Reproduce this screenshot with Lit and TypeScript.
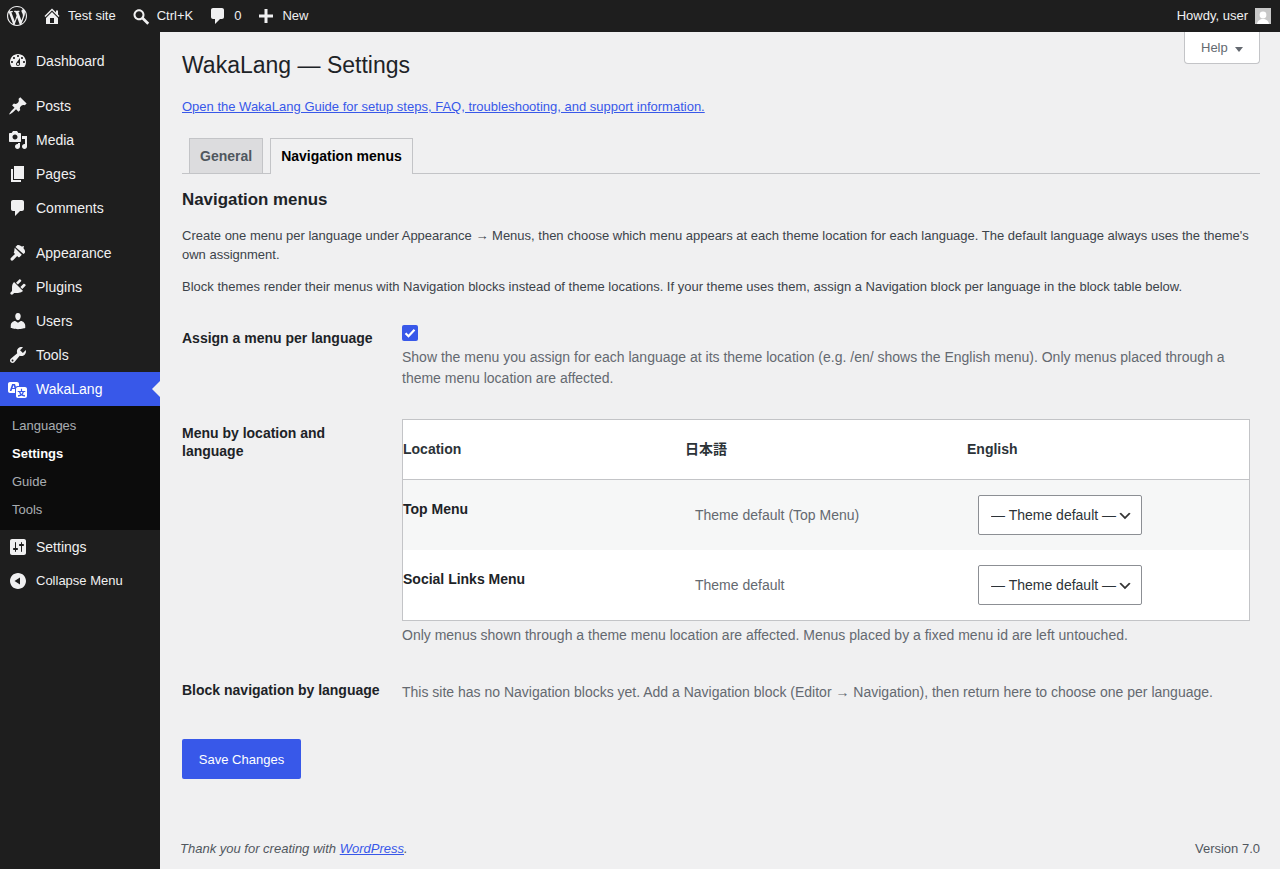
import { LitElement, css, html, svg } from "lit";
import { customElement } from "lit/decorators.js";

const ICONS: Record<string, string> = {
  wp: "M20 10c0-5.51-4.49-10-10-10C4.48 0 0 4.49 0 10c0 5.52 4.48 10 10 10 5.51 0 10-4.48 10-10zM7.78 15.37L4.37 6.22c.55-.02 1.17-.08 1.17-.08.5-.06.44-1.13-.06-1.11 0 0-1.45.11-2.37.11-.18 0-.37 0-.58-.01C4.12 2.69 6.87 1.11 10 1.11c2.33 0 4.45.87 6.05 2.34-.68-.11-1.65.39-1.65 1.58 0 .74.45 1.36.9 2.1.35.61.55 1.36.55 2.46 0 1.49-1.4 5-1.4 5l-3.03-8.37c.54-.02.82-.17.82-.17.5-.05.44-1.25-.06-1.22 0 0-1.44.12-2.38.12-.87 0-2.33-.12-2.33-.12-.5-.03-.56 1.2-.06 1.22l.92.08 1.26 3.41zM17.41 10c.24-.64.74-1.87.43-4.25.7 1.29 1.05 2.71 1.05 4.25 0 3.29-1.73 6.24-4.4 7.78.97-2.59 1.94-5.2 2.92-7.78zM6.1 18.09C3.12 16.65 1.11 13.53 1.11 10c0-1.3.23-2.48.72-3.59C3.25 10.3 4.67 14.2 6.1 18.09zm4.03-6.63l2.58 6.98c-.86.29-1.76.45-2.71.45-.79 0-1.57-.11-2.29-.33.81-2.38 1.62-4.74 2.42-7.1z",
  home: "M16 8.5l1.53 1.53-1.06 1.06L10 4.62l-6.47 6.47-1.06-1.06L10 2.5l4 4v-2h2v4zm-6-2.46l6 5.99V18H4v-5.97zM12 17v-5H8v5h4z",
  search: "M12.9 11.5l5.3 5.3-1.9 1.9-5.3-5.3c-.9.6-1.9.9-3 .9C5 14.3 2.5 11.8 2.5 8.8S5 3.3 8 3.3s5.5 2.5 5.5 5.5c0 1-.2 1.9-.6 2.7zM8 5.3c-1.9 0-3.5 1.6-3.5 3.5s1.6 3.5 3.5 3.5 3.5-1.6 3.5-3.5S9.9 5.3 8 5.3z",
  comment: "M5 2h9c1.1 0 2 .9 2 2v7c0 1.1-.9 2-2 2h-2l-5 5v-5H5c-1.1 0-2-.9-2-2V4c0-1.1.9-2 2-2z",
  plus: "M17 8.500v3h-5.500V17h-3v-5.500H3v-3h5.500V3h3v5.500z",
  dashboard: "M3.76 16h12.48c1.1-1.37 1.76-3.11 1.76-5 0-4.42-3.58-8-8-8s-8 3.58-8 8c0 1.89.66 3.63 1.76 5zM10 4c.55 0 1 .45 1 1s-.45 1-1 1-1-.45-1-1 .45-1 1-1zM6 6c.55 0 1 .45 1 1s-.45 1-1 1-1-.45-1-1 .45-1 1-1zm8 0c.55 0 1 .45 1 1s-.45 1-1 1-1-.45-1-1 .45-1 1-1zm-5.37 5.55L12 7v6c0 1.1-.9 2-2 2s-2-.9-2-2c0-.57.24-1.08.63-1.45zM4 10c.55 0 1 .45 1 1s-.45 1-1 1-1-.45-1-1 .45-1 1-1zm12 0c.55 0 1 .45 1 1s-.45 1-1 1-1-.45-1-1 .45-1 1-1zm-5 3c0-.55-.45-1-1-1s-1 .45-1 1 .45 1 1 1 1-.45 1-1z",
  pin: "M10.44 3.02l1.82-1.82 6.36 6.35-1.83 1.82c-1.05-.68-2.48-.57-3.41.36l-.75.75c-.92.93-1.04 2.35-.35 3.41l-1.83 1.82-2.41-2.41-2.8 2.79c-.42.42-3.38 2.71-3.8 2.29s1.86-3.39 2.28-3.81l2.79-2.79L4.1 9.36l1.83-1.82c1.05.69 2.48.57 3.4-.36l.75-.75c.93-.92 1.05-2.35.36-3.41z",
  media: "M13 11V4c0-.55-.45-1-1-1h-1.67L9 1H5L3.67 3H2c-.55 0-1 .45-1 1v7c0 .55.45 1 1 1h10c.55 0 1-.45 1-1zM7 4.5c1.38 0 2.5 1.12 2.5 2.5S8.38 9.5 7 9.5 4.5 8.38 4.5 7 5.62 4.5 7 4.5zM14 6h5v10.5c0 1.38-1.12 2.5-2.5 2.5S14 17.88 14 16.5s1.12-2.5 2.5-2.5c.17 0 .34.02.5.05V9h-3V6zm-4 8.05V13h2v3.5c0 1.38-1.12 2.5-2.5 2.5S7 17.88 7 16.5 8.12 14 9.5 14c.17 0 .34.02.5.05z",
  pages: "M6 15V2h10v13H6zm-1 1h8v2H3V5h2v11z",
  brush: "M7.4 4L9 2.4c.5-.5 2.3-.5 3.5.3.7.4 1 .9 1.6.8.7-.1 1.300-.7 1.700-.3.4.4-.2 1-.3 1.700-.1.6.5.9.9 1.600.8 1.200.8 3 .3 3.500l-1.200 1.100zM6.700 4.700l7.100 7.100-2.100 2.100c-.5.5-1.200.5-1.600.1l-.9-.9-4.100 4.100c-.6.6-1.600.6-2.200 0s-.6-1.600 0-2.200l4.100-4.100-.9-.9c-.4-.4-.4-1.100.1-1.600z",
  plugin: "M13.11 4.36L9.87 7.6 8 5.73l3.24-3.24c.35-.34 1.05-.2 1.56.32.52.51.66 1.21.31 1.55zm-8 1.77l.91-1.12 9.01 9.01-1.19.84c-.71.71-2.63 1.16-3.82 1.16H6.14L4.9 17.26c-.59.59-1.54.59-2.12 0-.59-.58-.59-1.53 0-2.12l1.24-1.24v-3.88c0-1.13.4-3.19 1.09-3.89zm7.26 3.97l3.24-3.24c.34-.35 1.04-.21 1.55.31.52.51.66 1.21.31 1.55l-3.24 3.25z",
  users: "M10 9.25c-2.27 0-2.73-3.44-2.73-3.44C7 4.02 7.82 2 9.97 2c2.16 0 2.98 2.02 2.71 3.81 0 0-.41 3.44-2.68 3.44zm0 2.57L12.72 10c2.39 0 4.52 2.33 4.52 4.53v2.49s-3.65 1.13-7.24 1.13c-3.65 0-7.24-1.13-7.24-1.13v-2.49c0-2.25 1.94-4.48 4.47-4.48z",
  tools: "M16.68 9.77c-1.34 1.34-3.3 1.67-4.95.99l-5.41 6.52c-.99.99-2.59.99-3.58 0s-.99-2.59 0-3.57l6.52-5.42c-.68-1.65-.35-3.61.99-4.95 1.28-1.28 3.12-1.62 4.72-1.06l-2.89 2.89 2.82 2.82 2.86-2.87c.53 1.58.18 3.39-1.08 4.65zM3.81 16.21c.4.39 1.04.39 1.43 0 .4-.4.4-1.04 0-1.43-.39-.4-1.03-.4-1.43 0-.39.39-.39 1.03 0 1.43z",
  translation: "M11 7H9.49c-.63 0-1.25.3-1.59.7L7 5H4.13l-2.39 7h1.69l.74-2H7v4H2c-1.1 0-2-.9-2-2V5c0-1.1.9-2 2-2h7c1.1 0 2 .9 2 2v2zM6.51 9H4.49l1-2.93zM10 8h7c1.1 0 2 .9 2 2v7c0 1.1-.9 2-2 2h-7c-1.1 0-2-.9-2-2v-7c0-1.1.9-2 2-2zm7.25 5v-1.08h-3.17V9.75h-1.16v2.17H9.75V13h1.28c.11.85.56 1.85 1.28 2.62-.87.36-1.89.62-2.31.62-.01.02.22.97.2 1.46.84 0 2.21-.5 3.28-1.15 1.09.65 2.48 1.15 3.34 1.15-.02-.49.2-1.44.2-1.46-.43 0-1.49-.27-2.38-.63.7-.77 1.14-1.77 1.25-2.61h1.36zm-3.81 1.93c-.5-.46-.85-1.13-1.01-1.93h2.09c-.17.8-.51 1.47-1 1.93l-.04.03s-.03-.02-.04-.03z",
  settings: "M18 16V4c0-1.1-.9-2-2-2H4c-1.1 0-2 .9-2 2v12c0 1.1.9 2 2 2h12c1.1 0 2-.9 2-2zM8 11h1c.55 0 1 .45 1 1s-.45 1-1 1H8v1.5c0 .28-.22.5-.5.5s-.5-.22-.5-.5V13H6c-.55 0-1-.45-1-1s.45-1 1-1h1V5.5c0-.28.22-.5.5-.5s.5.22.5.5V11zm5-2h-1c-.55 0-1-.45-1-1s.45-1 1-1h1V5.5c0-.28.22-.5.5-.5s.5.22.5.5V7h1c.55 0 1 .45 1 1s-.45 1-1 1h-1v5.5c0 .28-.22.5-.5.5s-.5-.22-.5-.5V9z",
  collapse: "M10 2c4.42 0 8 3.58 8 8s-3.58 8-8 8-8-3.58-8-8 3.58-8 8-8zm2 4.5L6.500 10l5.500 3.500v-7z",
};

const icon = (name: string, size = 20) => html`<svg class="icon" width=${size} height=${size} viewBox="0 0 20 20" fill="currentColor">${svg`<path d=${ICONS[name]}></path>`}</svg>`;

const MENU_TOP = [
  { icon: "dashboard", label: "Dashboard", group: true },
  { icon: "pin", label: "Posts" },
  { icon: "media", label: "Media" },
  { icon: "pages", label: "Pages" },
  { icon: "comment", label: "Comments", group: true },
  { icon: "brush", label: "Appearance" },
  { icon: "plugin", label: "Plugins" },
  { icon: "users", label: "Users" },
  { icon: "tools", label: "Tools" },
];

@customElement("app-root")
class AppRoot extends LitElement {
  static styles = css`
    :host {
      display: block;
      font-family: "Liberation Sans", Arial, "Noto Sans CJK JP", sans-serif;
      font-size: 13px;
      line-height: 1.4;
      color: #3c434a;
    }
    * { box-sizing: border-box; }
    a { color: #3858e9; }
    .icon { display: block; flex: none; }

    .bar {
      height: 32px;
      background: #1e1e1e;
      color: #f0f0f1;
      display: flex;
      align-items: center;
      justify-content: space-between;
      padding: 0 9px 0 7px;
    }
    .bar-left, .bar-item, .howdy { display: flex; align-items: center; }
    .bar-left { gap: 15px; }
    .bar-item { gap: 6px; }
    .howdy { gap: 7px; }
    .avatar { width: 16px; height: 16px; display: block; }

    .page { display: flex; min-height: 837px; }

    .side {
      width: 160px;
      flex: none;
      background: #1e1e1e;
      color: #f0f0f1;
      padding-top: 12px;
      font-size: 14px;
    }
    .item {
      height: 34px;
      display: flex;
      align-items: center;
      gap: 8px;
      padding-left: 8px;
      line-height: 18px;
      position: relative;
    }
    .item.group { margin-bottom: 11px; }
    .item.current { background: #3858e9; color: #fff; }
    .item.current::after {
      content: "";
      position: absolute;
      right: 0;
      top: 50%;
      margin-top: -8px;
      border: 8px solid transparent;
      border-right-color: #f0f0f1;
    }
    .item.small { font-size: 13px; }
    .sub {
      background: #0c0c0c;
      padding: 6px 0;
      font-size: 13px;
      color: rgba(240, 246, 252, 0.7);
    }
    .sub div { height: 28px; line-height: 28px; padding-left: 12px; }
    .sub .on { color: #fff; font-weight: 700; }

    .main {
      flex: 1;
      min-width: 0;
      background: #f0f0f1;
      position: relative;
      display: flex;
      flex-direction: column;
    }
    .help {
      position: absolute;
      top: 0;
      right: 20px;
      width: 76px;
      height: 32px;
      background: #fff;
      border: 1px solid #c3c4c7;
      border-top: none;
      border-radius: 0 0 4px 4px;
      color: #646970;
      display: flex;
      align-items: center;
      gap: 7px;
      padding: 1px 0 0 16px;
    }
    .caret { border: 4px solid transparent; border-top: 5px solid #646970; border-bottom: none; margin-top: 2px; }

    .wrap { padding: 0 20px 0 22px; flex: 1; }
    h1 {
      margin: 0;
      padding: 17px 0 0;
      font-size: 23px;
      font-weight: 400;
      line-height: 32px;
      color: #1d2327;
    }
    .guide { margin: 17px 0 0; line-height: 18px; }
    .tabs {
      margin-top: 22px;
      height: 36px;
      display: flex;
      gap: 7px;
      padding-left: 7px;
      border-bottom: 1px solid #c3c4c7;
    }
    .tab {
      height: 35px;
      padding: 0 10px;
      border: 1px solid #c3c4c7;
      border-bottom: none;
      background: #dcdcde;
      color: #50575e;
      font-size: 14px;
      font-weight: 600;
      line-height: 35px;
    }
    .tab.active { height: 36px; background: #f0f0f1; color: #000; }
    h2 {
      margin: 0;
      padding-top: 16px;
      font-size: 16.900px;
      font-weight: 700;
      line-height: 20px;
      color: #1d2327;
    }
    .intro { margin: 16px 0 0; line-height: 19px; }
    .intro + .intro { margin-top: 13px; }

    .row { display: grid; grid-template-columns: 220px 1fr; font-size: 14px; }
    .row-label { font-weight: 700; line-height: 18px; color: #1d2327; }
    .desc { color: #646970; line-height: 21px; }

    .r1 { margin-top: 29px; }
    .r1 .row-label { padding-top: 4px; }
    .check {
      width: 16px;
      height: 16px;
      display: block;
      background: #3858e9;
      border-radius: 2px;
      color: #fff;
      margin-bottom: 6px;
    }
    .r2 { margin-top: 30px; }
    .r2 .row-label { padding-top: 5px; padding-right: 20px; }
    .grid { border: 1px solid #c3c4c7; background: #fff; margin-right: 10px; }
    .grid-row { display: grid; grid-template-columns: 282px 282px 1fr; }
    .grid-head { height: 60px; align-items: center; border-bottom: 1px solid #c3c4c7; font-weight: 700; color: #2c3338; }
    .grid-body { height: 70px; }
    .grid-body.alt { background: #f6f7f7; }
    .grid-body .name { font-weight: 700; padding-top: 20px; line-height: 18px; color: #1d2327; }
    .grid-body .val { padding: 1px 0 0 10px; color: #646970; display: flex; align-items: center; }
    .grid-body .sel { padding-left: 11px; display: flex; align-items: center; }
    select {
      appearance: none;
      width: 164px;
      height: 40px;
      padding: 0 24px 0 12px;
      border: 1px solid #8c8f94;
      border-radius: 2px;
      background: #fff url('data:image/svg+xml;utf8,<svg xmlns="http://www.w3.org/2000/svg" width="20" height="20"><path d="M5 6l5 5 5-5 2 1-7 7-7-7 2-1z" fill="%23333"/></svg>') no-repeat right 8px top 55% / 16px 16px;
      color: #2c3338;
      font: 14px "Liberation Sans", Arial, sans-serif;
    }
    .note { margin: 4px 0 0; }

    .r3 { margin-top: 34px; }
    .r3 .row-label { padding-top: 1px; }
    .r3 .desc { padding-top: 2px; }
    .save {
      display: block;
      margin-top: 36px;
      width: 119px;
      height: 40px;
      background: #3858e9;
      color: #fff;
      border: none;
      border-radius: 2px;
      font: 13px "Liberation Sans", Arial, sans-serif;
    }
    footer {
      display: flex;
      justify-content: space-between;
      padding: 0 20px;
      height: 29px;
      color: #50575e;
      line-height: 18px;
    }
    footer em { font-style: italic; }
  `;

  renderItem(m: { icon: string; label: string; group?: boolean }) {
    return html`<div class="item ${m.group ? "group" : ""}">${icon(m.icon)}<span>${m.label}</span></div>`;
  }

  render() {
    return html`
      <div class="bar">
        <div class="bar-left">
          <div>${icon("wp")}</div>
          <div class="bar-item">${icon("home")}Test site</div>
          <div class="bar-item">${icon("search")}Ctrl+K</div>
          <div class="bar-item">${icon("comment")}0</div>
          <div class="bar-item">${icon("plus")}New</div>
        </div>
        <div class="howdy">
          Howdy, user
          <svg class="avatar" viewBox="0 0 16 16"><rect width="16" height="16" fill="#c8c8c8"></rect><circle cx="8" cy="7" r="3.400" fill="#fff"></circle><path d="M2 16c.5-3.500 3-5 6-5s5.500 1.500 6 5z" fill="#fff"></path></svg>
        </div>
      </div>
      <div class="page">
        <nav class="side">
          ${MENU_TOP.map((m) => this.renderItem(m))}
          <div class="item current">${icon("translation")}<span>WakaLang</span></div>
          <div class="sub">
            <div>Languages</div>
            <div class="on">Settings</div>
            <div>Guide</div>
            <div>Tools</div>
          </div>
          <div class="item">${icon("settings")}<span>Settings</span></div>
          <div class="item small">${icon("collapse")}<span>Collapse Menu</span></div>
        </nav>
        <main class="main">
          <div class="help">Help <span class="caret"></span></div>
          <div class="wrap">
            <h1>WakaLang — Settings</h1>
            <p class="guide"><a href="#">Open the WakaLang Guide for setup steps, FAQ, troubleshooting, and support information.</a></p>
            <div class="tabs">
              <div class="tab">General</div>
              <div class="tab active">Navigation menus</div>
            </div>
            <h2>Navigation menus</h2>
            <p class="intro">Create one menu per language under Appearance → Menus, then choose which menu appears at each theme location for each language. The default language always uses the theme's own assignment.</p>
            <p class="intro">Block themes render their menus with Navigation blocks instead of theme locations. If your theme uses them, assign a Navigation block per language in the block table below.</p>

            <div class="row r1">
              <div class="row-label">Assign a menu per language</div>
              <div>
                <svg class="check" viewBox="0 0 16 16"><path d="M3.500 8.200l3 3 6-6.500" fill="none" stroke="currentColor" stroke-width="2.200"></path></svg>
                <div class="desc">Show the menu you assign for each language at its theme location (e.g. /en/ shows the English menu). Only menus placed through a theme menu location are affected.</div>
              </div>
            </div>

            <div class="row r2">
              <div class="row-label">Menu by location and language</div>
              <div>
                <div class="grid">
                  <div class="grid-row grid-head"><div>Location</div><div>日本語</div><div>English</div></div>
                  <div class="grid-row grid-body alt">
                    <div class="name">Top Menu</div>
                    <div class="val">Theme default (Top Menu)</div>
                    <div class="sel"><select><option>— Theme default —</option></select></div>
                  </div>
                  <div class="grid-row grid-body">
                    <div class="name">Social Links Menu</div>
                    <div class="val">Theme default</div>
                    <div class="sel"><select><option>— Theme default —</option></select></div>
                  </div>
                </div>
                <div class="desc note">Only menus shown through a theme menu location are affected. Menus placed by a fixed menu id are left untouched.</div>
              </div>
            </div>

            <div class="row r3">
              <div class="row-label">Block navigation by language</div>
              <div class="desc">This site has no Navigation blocks yet. Add a Navigation block (Editor → Navigation), then return here to choose one per language.</div>
            </div>

            <button class="save">Save Changes</button>
          </div>
          <footer>
            <em>Thank you for creating with <a href="#">WordPress</a>.</em>
            <span>Version 7.0</span>
          </footer>
        </main>
      </div>
    `;
  }
}

declare global {
  interface HTMLElementTagNameMap {
    "app-root": AppRoot;
  }
}
